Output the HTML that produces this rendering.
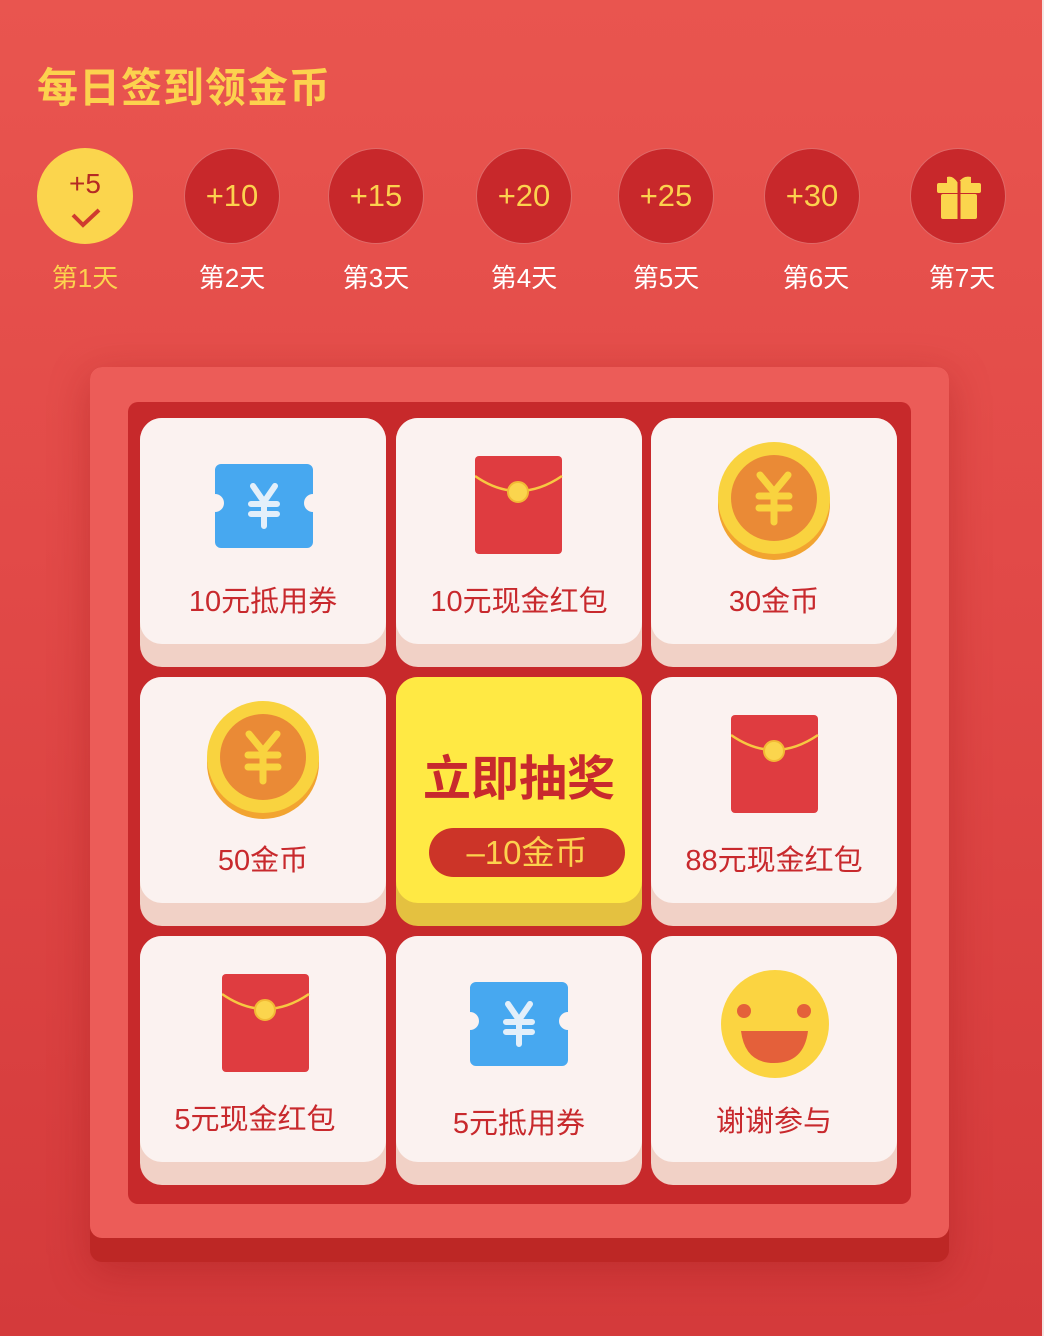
<!DOCTYPE html><html><head><meta charset="utf-8"><style>
*{margin:0;padding:0;box-sizing:border-box}
body{width:1044px;height:1336px;overflow:hidden;position:relative;font-family:"Liberation Sans","Noto Sans CJK SC",sans-serif;background:linear-gradient(180deg,#e9554f 0%,#e24a48 40%,#d43a3b 100%)}
.edge{position:absolute;right:0;top:0;width:2px;height:1336px;background:#f4e6e4}
h1{position:absolute;left:37px;top:54px;font-size:41px;color:#fcd24e;font-weight:bold;letter-spacing:1px}
.c{position:absolute;top:148px;width:96px;height:96px;border-radius:50%;background:#c8282b;border:1px solid #e06a68;color:#fcd24e;font-size:31px;text-align:center;line-height:94px}
.l{position:absolute;top:258px;width:120px;text-align:center;font-size:26px;color:#fff}
.panel{position:absolute;left:90px;top:367px;width:859px;height:895px;border-radius:12px;background:#bd2725;box-shadow:0 10px 40px rgba(150,20,20,.35)}
.panel2{position:absolute;left:90px;top:367px;width:859px;height:871px;border-radius:12px;background:#ec5c58}
.inner{position:absolute;left:128px;top:402px;width:783px;height:802px;border-radius:10px;background:#c7292b}
.cell{position:absolute;width:246px;height:249px;border-radius:22px;background:#f1d1c6}
.face{position:absolute;left:0;top:0;width:246px;height:226px;border-radius:22px;background:#fbf2f0}
.t{position:absolute;left:0;width:246px;text-align:center;font-size:29px;color:#c8292d;top:160px}
.ic{position:absolute}
</style></head><body>
<div class="edge"></div>
<h1>每日签到领金币</h1>
<div class="c" style="left:37px;background:#fbd54d;border-color:#fbd54d;color:#b52a24;line-height:70px;font-size:28px">+5<svg style="position:absolute;left:32px;top:58px" width="32" height="22"><path d="M3 8 L13 18 L29 3" stroke="#cf3b2f" stroke-width="4" fill="none"/></svg></div>
<div class="c" style="left:184px">+10</div>
<div class="c" style="left:328px">+15</div>
<div class="c" style="left:476px">+20</div>
<div class="c" style="left:618px">+25</div>
<div class="c" style="left:764px">+30</div>
<div class="c" style="left:910px"><svg style="position:absolute;left:24px;top:24px" width="48" height="48"><path d="M12 4 Q18 2 23 10 Q28 2 36 4 L36 10 L24 12 L12 10Z" fill="#fbd54d"/><rect x="2" y="10" width="44" height="10" rx="2" fill="#fbd54d"/><rect x="6" y="21" width="36" height="25" rx="2" fill="#fbd54d"/><rect x="22.5" y="8" width="3" height="38" fill="#c8282b"/></svg></div>
<div class="l" style="left:25px;color:#fcd24e">第1天</div>
<div class="l" style="left:172px">第2天</div>
<div class="l" style="left:316px">第3天</div>
<div class="l" style="left:464px">第4天</div>
<div class="l" style="left:606px">第5天</div>
<div class="l" style="left:756px">第6天</div>
<div class="l" style="left:902px">第7天</div>

<div class="panel"></div><div class="panel2"></div><div class="inner"></div>

<div class="cell" style="left:140px;top:418px"><div class="face"></div>
<svg class="ic" style="left:75px;top:46px" width="98" height="84"><path d="M6 0 H92 A6 6 0 0 1 98 6 V30 A9 9 0 0 0 98 48 V78 A6 6 0 0 1 92 84 H6 A6 6 0 0 1 0 78 V48 A9 9 0 0 0 0 30 V6 A6 6 0 0 1 6 0Z" fill="#47a8f0"/><path d="M38 22 L49 38 L60 22 M49 38 V62 M36 40 H62 M36 50 H62" stroke="#e3effa" stroke-width="6" stroke-linecap="round" fill="none"/></svg>
<div class="t">10元抵用券</div></div>
<div class="cell" style="left:396px;top:418px"><div class="face"></div>
<svg class="ic" style="left:79px;top:38px" width="88" height="100"><rect x="0" y="0" width="87" height="98" rx="4" fill="#df3c40"/><path d="M0 20 Q43 50 87 20" stroke="#f7c842" stroke-width="2.5" fill="none"/><circle cx="43" cy="36" r="10" fill="#fbd54d" stroke="#f2b935" stroke-width="2"/></svg>
<div class="t">10元现金红包</div></div>
<div class="cell" style="left:651px;top:418px"><div class="face"></div>
<svg class="ic" style="left:66px;top:24px" width="114" height="120"><ellipse cx="57" cy="62" rx="56" ry="56" fill="#f2a430"/><circle cx="57" cy="56" r="56" fill="#f9d33f"/><circle cx="57" cy="56" r="43" fill="#ea8a36"/><path d="M43 33 L57 50 L71 33 M57 50 V80 M42 54 H72 M42 66 H72" stroke="#f9d33f" stroke-width="7" stroke-linecap="round" fill="none"/></svg>
<div class="t">30金币</div></div>
<div class="cell" style="left:140px;top:677px"><div class="face"></div>
<svg class="ic" style="left:66px;top:24px" width="114" height="120"><ellipse cx="57" cy="62" rx="56" ry="56" fill="#f2a430"/><circle cx="57" cy="56" r="56" fill="#f9d33f"/><circle cx="57" cy="56" r="43" fill="#ea8a36"/><path d="M43 33 L57 50 L71 33 M57 50 V80 M42 54 H72 M42 66 H72" stroke="#f9d33f" stroke-width="7" stroke-linecap="round" fill="none"/></svg>
<div class="t">50金币</div></div>
<div class="cell" style="left:396px;top:677px;background:#e4c140"><div class="face" style="background:#ffe944"></div>
<div style="position:absolute;left:0;width:246px;top:62px;text-align:center;font-size:48px;font-weight:bold;color:#c8292d">立即抽奖</div>
<div style="position:absolute;left:33px;top:151px;width:196px;height:49px;border-radius:25px;background:#cc3428;color:#fcd24e;font-size:33px;text-align:center;line-height:49px">–10金币</div></div>
<div class="cell" style="left:651px;top:677px"><div class="face"></div>
<svg class="ic" style="left:80px;top:38px" width="88" height="100"><rect x="0" y="0" width="87" height="98" rx="4" fill="#df3c40"/><path d="M0 20 Q43 50 87 20" stroke="#f7c842" stroke-width="2.5" fill="none"/><circle cx="43" cy="36" r="10" fill="#fbd54d" stroke="#f2b935" stroke-width="2"/></svg>
<div class="t">88元现金红包</div></div>
<div class="cell" style="left:140px;top:936px"><div class="face"></div>
<svg class="ic" style="left:82px;top:38px" width="88" height="100"><rect x="0" y="0" width="87" height="98" rx="4" fill="#df3c40"/><path d="M0 20 Q43 50 87 20" stroke="#f7c842" stroke-width="2.5" fill="none"/><circle cx="43" cy="36" r="10" fill="#fbd54d" stroke="#f2b935" stroke-width="2"/></svg>
<div class="t" style="left:-8px">5元现金红包</div></div>
<div class="cell" style="left:396px;top:936px"><div class="face"></div>
<svg class="ic" style="left:74px;top:46px" width="98" height="84"><path d="M6 0 H92 A6 6 0 0 1 98 6 V30 A9 9 0 0 0 98 48 V78 A6 6 0 0 1 92 84 H6 A6 6 0 0 1 0 78 V48 A9 9 0 0 0 0 30 V6 A6 6 0 0 1 6 0Z" fill="#47a8f0"/><path d="M38 22 L49 38 L60 22 M49 38 V62 M36 40 H62 M36 50 H62" stroke="#e3effa" stroke-width="6" stroke-linecap="round" fill="none"/></svg>
<div class="t" style="top:164px">5元抵用券</div></div>
<div class="cell" style="left:651px;top:936px"><div class="face"></div>
<svg class="ic" style="left:69px;top:33px" width="110" height="110"><circle cx="55" cy="55" r="54" fill="#fbd441"/><circle cx="24" cy="42" r="7" fill="#e4603a"/><circle cx="84" cy="42" r="7" fill="#e4603a"/><path d="M21 62 H88 Q84 94 54 94 Q25 94 21 62Z" fill="#e4603a"/></svg>
<div class="t" style="top:162px">谢谢参与</div></div>
</body></html>
